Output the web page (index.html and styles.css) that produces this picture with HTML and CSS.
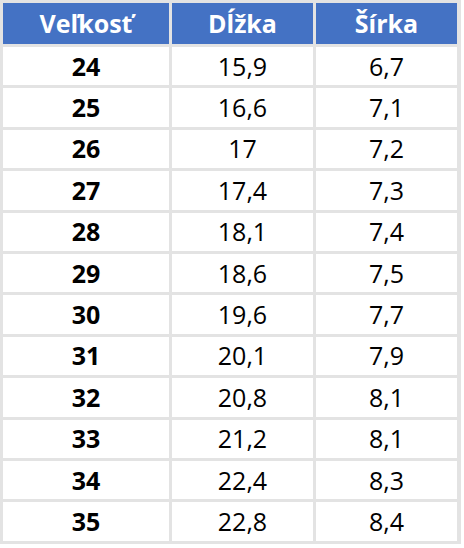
FILE: index.html
```html
<!DOCTYPE html>
<html lang="sk">
<head>
<meta charset="utf-8">
<link rel="stylesheet" href="styles.css">
</head>
<body>
<div class="table">
  <div class="th">Veľkosť</div><div class="th">Dĺžka</div><div class="th">Šírka</div>
  <div class="td b">24</div><div class="td">15,9</div><div class="td">6,7</div>
  <div class="td b">25</div><div class="td">16,6</div><div class="td">7,1</div>
  <div class="td b">26</div><div class="td">17</div><div class="td">7,2</div>
  <div class="td b">27</div><div class="td">17,4</div><div class="td">7,3</div>
  <div class="td b">28</div><div class="td">18,1</div><div class="td">7,4</div>
  <div class="td b">29</div><div class="td">18,6</div><div class="td">7,5</div>
  <div class="td b">30</div><div class="td">19,6</div><div class="td">7,7</div>
  <div class="td b">31</div><div class="td">20,1</div><div class="td">7,9</div>
  <div class="td b">32</div><div class="td">20,8</div><div class="td">8,1</div>
  <div class="td b">33</div><div class="td">21,2</div><div class="td">8,1</div>
  <div class="td b">34</div><div class="td">22,4</div><div class="td">8,3</div>
  <div class="td b">35</div><div class="td">22,8</div><div class="td">8,4</div>
</div>
</body>
</html>
```
FILE: styles.css
```css
html, body {
  margin: 0;
  padding: 0;
  background: #ffffff;
}
.table {
  display: grid;
  grid-template-columns: 166px 141px 141px;
  grid-template-rows: 41px repeat(12, 38.4px);
  gap: 3px;
  padding: 3px 4px 3px 3px;
  width: max-content;
  background: #e3e3e3;
  font-family: "Open Sans", "Liberation Sans", sans-serif;
}
.th {
  background: #4472c4;
  color: #ffffff;
  font-weight: 700;
  font-size: 25px;
  display: flex;
  align-items: center;
  justify-content: center;
  line-height: 1;
}
.td {
  background: #ffffff;
  color: #000000;
  font-size: 25px;
  display: flex;
  align-items: center;
  justify-content: center;
  line-height: 1;
}
.td.b {
  font-weight: 700;
}
```
